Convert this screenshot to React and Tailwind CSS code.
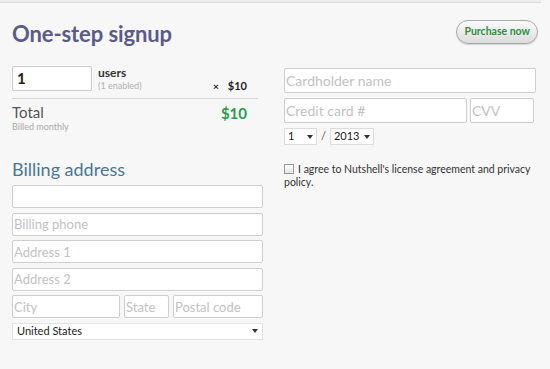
import React from "react";

const font = { fontFamily: "Lato, 'Noto Sans', sans-serif" };

function Field({ placeholder, className = "" }) {
  return (
    <input
      placeholder={placeholder}
      className={`h-[23px] bg-white border border-[#cfcfcf] rounded-[2px] px-[1px] text-[13px] text-[#333] placeholder:text-[#c2c2c2] outline-none ${className}`}
    />
  );
}

function Caret() {
  return (
    <svg width="6" height="4" viewBox="0 0 6 4" className="shrink-0">
      <path d="M0 0h6L3 4z" fill="#333" />
    </svg>
  );
}

export default function App() {
  return (
    <div className="w-[550px] h-[369px] bg-[#f7f7f7] overflow-hidden" style={font}>
      <div className="h-[3px] w-[541px] border-b border-[#dcdcdc] bg-[#ececec]" />

      <div className="flex pl-[12px] gap-[21px]">
        {/* Left: plan + billing */}
        <div className="w-[251px] flex flex-col">
          <h1 className="mt-[17px] text-[22px] leading-[28px] font-bold text-[#5a5b8b] tracking-[-0.1px]">
            One-step signup
          </h1>

          <div className="mt-[18px] h-[25px] flex items-start pr-[16px]">
            <div className="w-[80px] h-[25px] bg-white border border-[#cfcfcf] rounded-[2px] flex items-center px-[4px] text-[15px] font-bold text-[#222]">
              1
            </div>
            <div className="ml-[6px] flex flex-col leading-none mt-[1px]">
              <span className="text-[12px] font-bold text-[#333]">users</span>
              <span className="text-[9px] text-[#b0b0b0] mt-[2px]">(1 enabled)</span>
            </div>
            <div className="ml-auto mt-[14px] flex items-center text-[11px] leading-[12px] font-bold text-[#222]">
              <span className="text-[10px] mr-[9px]">×</span>
              <span>$10</span>
            </div>
          </div>

          <div className="mt-[7px] border-t border-[#d6d6d6] mr-[5px]" />

          <div className="mt-[4px] flex items-start pr-[16px]">
            <div className="flex flex-col">
              <span className="text-[15px] leading-[18px] text-[#555]">Total</span>
              <span className="text-[9px] leading-[10px] text-[#aaa] mt-[1px]">Billed monthly</span>
            </div>
            <span className="ml-auto text-[15px] leading-[20px] font-bold text-[#2e9a4c]">$10</span>
          </div>

          <h2 className="mt-[26px] text-[18px] leading-[22px] text-[#477896]">Billing address</h2>

          <div className="mt-[5px] flex flex-col gap-[4.5px]">
            <Field className="w-full" />
            <Field placeholder="Billing phone" className="w-full" />
            <Field placeholder="Address 1" className="w-full" />
            <Field placeholder="Address 2" className="w-full" />
            <div className="flex gap-[4px]">
              <Field placeholder="City" className="w-[108px]" />
              <Field placeholder="State" className="w-[45px]" />
              <Field placeholder="Postal code" className="flex-1 min-w-0" />
            </div>
            <div className="h-[17px] bg-white border border-[#e2e2e2] flex items-center px-[4px] text-[11px] text-[#222]">
              <span>United States</span>
              <span className="ml-auto"><Caret /></span>
            </div>
          </div>
        </div>

        {/* Right: payment */}
        <div className="w-[254px] flex flex-col">
          <div className="mt-[17px] flex justify-end">
            <button className="h-[24px] px-[7px] rounded-full border border-[#a9a9a9] bg-gradient-to-b from-[#fafafa] to-[#dcdcdc] text-[10.5px] font-bold text-[#2d8f43] shadow-[0_1px_1px_rgba(0,0,0,0.15)]">
              Purchase now
            </button>
          </div>

          <div className="mt-[24px] flex flex-col gap-[5px]">
            <Field placeholder="Cardholder name" className="w-[252px] h-[25px] text-[14px]" />
            <div className="flex gap-[3px]">
              <Field placeholder="Credit card #" className="w-[183px] h-[25px] text-[14px]" />
              <Field placeholder="CVV" className="w-[64px] h-[25px] text-[14px]" />
            </div>
          </div>

          <div className="mt-[5px] flex items-center text-[11px] text-[#222]">
            <div className="w-[33px] h-[17px] bg-white border border-[#dcdcdc] flex items-center px-[3px]">
              <span>1</span>
              <span className="ml-auto"><Caret /></span>
            </div>
            <span className="mx-[4px] text-[#555]">/</span>
            <div className="w-[44px] h-[17px] bg-white border border-[#dcdcdc] flex items-center px-[3px]">
              <span>2013</span>
              <span className="ml-auto"><Caret /></span>
            </div>
          </div>

          <label className="mt-[18px] text-[10.5px] leading-[13px] text-[#333]">
            <span className="inline-block align-[-1px] w-[10px] h-[10px] mr-[4px] border border-[#999] bg-gradient-to-b from-[#fff] to-[#e6e6e6]" />
            I agree to Nutshell's license agreement and privacy policy.
          </label>
        </div>
      </div>
    </div>
  );
}
